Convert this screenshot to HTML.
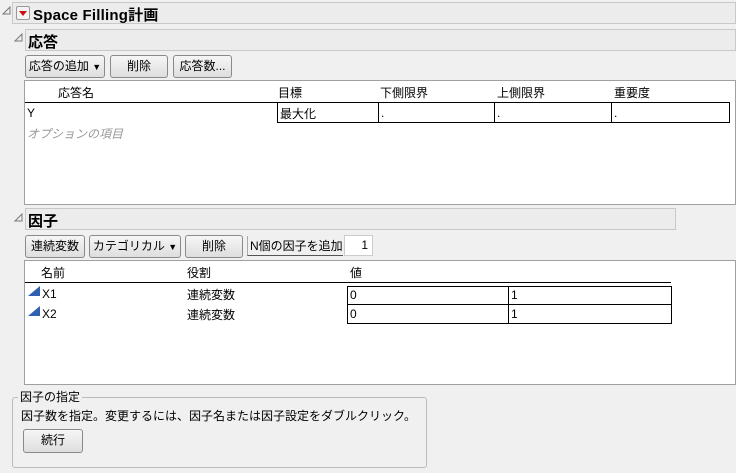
<!DOCTYPE html>
<html><head><meta charset="utf-8"><style>
*{box-sizing:border-box;margin:0;padding:0}
body{width:736px;height:473px;background:#f0f0f0;font-family:"Liberation Sans","Noto Sans CJK JP",sans-serif;font-size:12px;color:#000;position:relative;overflow:hidden}
.a{position:absolute;white-space:nowrap}
.hdr{position:absolute;border:1px solid #c8c8c8;background:#ececec}
.btn{position:absolute;border:1px solid #8a8a8a;border-radius:3px;background:linear-gradient(#f6f6f6,#dedede);text-align:center;line-height:20px;font-size:12px}
.box{position:absolute;background:#fff;border:1px solid #a0a0a0}
.tri{position:absolute;width:0;height:0}
.disc{position:absolute;width:9px;height:9px}
</style></head><body>
<svg class="disc" style="left:2px;top:6px" viewBox="0 0 9 9"><path d="M8 1 L8 8 L1 8 Z" fill="none" stroke="#777"/></svg>
<div class="hdr" style="left:12px;top:2px;width:724px;height:22px"></div>
<div class="a" style="left:16px;top:6px;width:14px;height:14px;border:1px solid #999;border-radius:2px;background:#f4f4f4"></div>
<div class="tri" style="left:19px;top:11px;border-left:4px solid transparent;border-right:4px solid transparent;border-top:5px solid #d01010"></div>
<div class="a" style="left:33px;top:4px;font-size:15px;font-weight:bold;letter-spacing:0.2px">Space Filling計画</div>
<svg class="disc" style="left:14px;top:33px" viewBox="0 0 9 9"><path d="M8 1 L8 8 L1 8 Z" fill="none" stroke="#777"/></svg>
<div class="hdr" style="left:25px;top:29px;width:711px;height:22px"></div>
<div class="a" style="left:28px;top:31px;font-size:15px;font-weight:bold">応答</div>
<div class="btn" style="left:25px;top:55px;width:80px;height:23px">応答の追加 <span style="font-size:9px">▼</span></div>
<div class="btn" style="left:110px;top:55px;width:58px;height:23px">削除</div>
<div class="btn" style="left:173px;top:55px;width:59px;height:23px">応答数...</div>
<div class="box" style="left:24px;top:80px;width:712px;height:125px"></div>
<div class="a" style="left:58px;top:84px">応答名</div>
<div class="a" style="left:278px;top:84px">目標</div>
<div class="a" style="left:380px;top:84px">下側限界</div>
<div class="a" style="left:497px;top:84px">上側限界</div>
<div class="a" style="left:614px;top:84px">重要度</div>
<div class="a" style="left:25px;top:102px;width:705px;border-top:1px solid #000"></div>
<div class="a" style="left:277px;top:102px;width:453px;height:21px;border:1px solid #000;border-top:none"></div>
<div class="a" style="left:378px;top:102px;height:21px;border-left:1px solid #000"></div>
<div class="a" style="left:494px;top:102px;height:21px;border-left:1px solid #000"></div>
<div class="a" style="left:611px;top:102px;height:21px;border-left:1px solid #000"></div>
<div class="a" style="left:27px;top:106px">Y</div>
<div class="a" style="left:280px;top:105px">最大化</div>
<div class="a" style="left:381px;top:106px">.</div>
<div class="a" style="left:497px;top:106px">.</div>
<div class="a" style="left:614px;top:106px">.</div>
<div class="a" style="left:27px;top:125px;color:#999;font-style:italic">オプションの項目</div>
<svg class="disc" style="left:14px;top:213px" viewBox="0 0 9 9"><path d="M8 1 L8 8 L1 8 Z" fill="none" stroke="#777"/></svg>
<div class="hdr" style="left:25px;top:208px;width:651px;height:22px"></div>
<div class="a" style="left:28px;top:210px;font-size:15px;font-weight:bold">因子</div>
<div class="btn" style="left:25px;top:235px;width:60px;height:23px">連続変数</div>
<div class="btn" style="left:89px;top:235px;width:92px;height:23px">カテゴリカル <span style="font-size:9px">▼</span></div>
<div class="btn" style="left:185px;top:235px;width:58px;height:23px">削除</div>
<div class="a" style="left:247px;top:236px;width:96px;height:20px;line-height:20px;border-bottom:1px solid #555;border-left:1px solid #aaa;padding-left:2px">N個の因子を追加</div>
<div class="a" style="left:344px;top:235px;width:29px;height:21px;background:#fff;border:1px solid #ccc;text-align:right;padding-right:4px;line-height:19px">1</div>
<div class="box" style="left:24px;top:260px;width:712px;height:125px"></div>
<div class="a" style="left:41px;top:264px">名前</div>
<div class="a" style="left:187px;top:264px">役割</div>
<div class="a" style="left:350px;top:264px">値</div>
<div class="a" style="left:25px;top:282px;width:646px;border-top:1px solid #000"></div>
<div class="a" style="left:347px;top:286px;width:325px;height:38px;border:1px solid #000"></div>
<div class="a" style="left:347px;top:304px;width:325px;border-top:1px solid #000"></div>
<div class="a" style="left:508px;top:286px;height:38px;border-left:1px solid #000"></div>
<svg class="a" style="left:28px;top:286px" width="13" height="10"><path d="M0 10 L12 0 L12 10 Z" fill="#3060b0"/></svg>
<svg class="a" style="left:28px;top:306px" width="13" height="10"><path d="M0 10 L12 0 L12 10 Z" fill="#3060b0"/></svg>
<div class="a" style="left:42px;top:287px">X1</div>
<div class="a" style="left:42px;top:307px">X2</div>
<div class="a" style="left:187px;top:286px">連続変数</div>
<div class="a" style="left:187px;top:306px">連続変数</div>
<div class="a" style="left:350px;top:288px">0</div>
<div class="a" style="left:511px;top:288px">1</div>
<div class="a" style="left:350px;top:307px">0</div>
<div class="a" style="left:511px;top:307px">1</div>
<div class="a" style="left:12px;top:397px;width:415px;height:71px;border:1px solid #bbb;border-radius:3px"></div>
<div class="a" style="left:18px;top:388px;background:#f0f0f0;padding:0 2px">因子の指定</div>
<div class="a" style="left:21px;top:407px">因子数を指定。変更するには、因子名または因子設定をダブルクリック。</div>
<div class="btn" style="left:23px;top:429px;width:60px;height:24px">続行</div>
</body></html>
